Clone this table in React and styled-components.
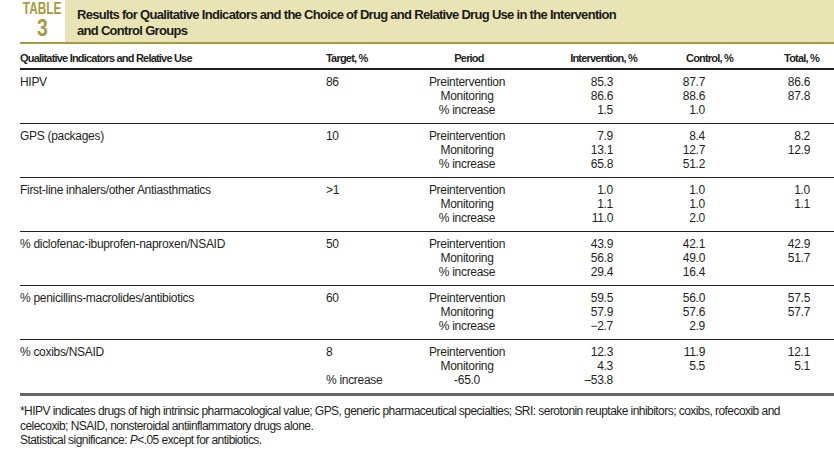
import React from "react";
import styled, { createGlobalStyle } from "styled-components";

const GlobalStyle = createGlobalStyle`
  html, body {
    margin: 0;
    padding: 0;
    background: #fff;
  }
  body {
    font-family: "Liberation Sans Narrow", "Arial Narrow", "Liberation Sans", Arial, sans-serif;
    color: #231f20;
  }
`;

// column layout: width, where headers and values sit
const columns = [
  { width: 306, head: "left", headPad: "0", val: "left", valPad: "0" },
  { width: 100, head: "left", headPad: "0", val: "left", valPad: "0" },
  { width: 82, head: "center", headPad: "0 0 0 4px", val: "center", valPad: "0" },
  { width: 142, head: "right", headPad: "0 13px 0 0", val: "right", valPad: "0 37px 0 0" },
  { width: 110, head: "right", headPad: "0 27px 0 0", val: "right", valPad: "0 55px 0 0" },
  { width: 74, head: "right", headPad: "0 15px 0 0", val: "right", valPad: "0 24px 0 0" },
];

const template = columns.map((c) => c.width + "px").join(" ");

const headers = [
  "Qualitative Indicators and Relative Use",
  "Target, %",
  "Period",
  "Intervention, %",
  "Control, %",
  "Total, %",
];

const groups = [
  {
    lines: [
      ["HIPV", "86", "Preintervention", "85.3", "87.7", "86.6"],
      ["", "", "Monitoring", "86.6", "88.6", "87.8"],
      ["", "", "% increase", "1.5", "1.0", ""],
    ],
  },
  {
    lines: [
      ["GPS (packages)", "10", "Preintervention", "7.9", "8.4", "8.2"],
      ["", "", "Monitoring", "13.1", "12.7", "12.9"],
      ["", "", "% increase", "65.8", "51.2", ""],
    ],
  },
  {
    lines: [
      ["First-line inhalers/other Antiasthmatics", ">1", "Preintervention", "1.0", "1.0", "1.0"],
      ["", "", "Monitoring", "1.1", "1.0", "1.1"],
      ["", "", "% increase", "11.0", "2.0", ""],
    ],
  },
  {
    lines: [
      ["% diclofenac-ibuprofen-naproxen/NSAID", "50", "Preintervention", "43.9", "42.1", "42.9"],
      ["", "", "Monitoring", "56.8", "49.0", "51.7"],
      ["", "", "% increase", "29.4", "16.4", ""],
    ],
  },
  {
    lines: [
      ["% penicillins-macrolides/antibiotics", "60", "Preintervention", "59.5", "56.0", "57.5"],
      ["", "", "Monitoring", "57.9", "57.6", "57.7"],
      ["", "", "% increase", "\u22122.7", "2.9", ""],
    ],
  },
  {
    last: true,
    lines: [
      ["% coxibs/NSAID", "8", "Preintervention", "12.3", "11.9", "12.1"],
      ["", "", "Monitoring", "4.3", "5.5", "5.1"],
      ["", "% increase", "-65.0", "\u201353.8", "", ""],
    ],
  },
];

function App() {
  return (
    <Page>
      <GlobalStyle />
      <TitleBar>
        <Label>
          <LabelWord>TABLE</LabelWord>
          <LabelNum>3</LabelNum>
        </Label>
        <Band>
          Results for Qualitative Indicators and the Choice of Drug and Relative Drug Use in the Intervention
          <br />
          and Control Groups
        </Band>
      </TitleBar>

      <Table>
        <HeadRow>
          {headers.map((h, i) => (
            <HeadCell key={h} $align={columns[i].head} $pad={columns[i].headPad}>
              {h}
            </HeadCell>
          ))}
        </HeadRow>

        {groups.map((g, gi) => (
          <Group key={gi} $last={g.last}>
            {g.lines.map((line, li) =>
              line.map((v, ci) => (
                <Cell
                  key={li + "-" + ci}
                  $align={columns[ci].val}
                  $pad={columns[ci].valPad}
                >
                  {v}
                </Cell>
              ))
            )}
          </Group>
        ))}
      </Table>

      <Notes>
        <p>
          *HIPV indicates drugs of high intrinsic pharmacological value; GPS, generic pharmaceutical specialties; SRI: serotonin reuptake inhibitors; coxibs, rofecoxib and
          <br />
          celecoxib; NSAID, nonsteroidal antiinflammatory drugs alone.
        </p>
        <p>
          Statistical significance: <em>P</em>&lt;.05 except for antibiotics.
        </p>
      </Notes>
    </Page>
  );
}

export default App;

const Page = styled.div`
  width: 834px;
  height: 458px;
  overflow: hidden;
  background: #fff;
`;

const TitleBar = styled.div`
  display: flex;
  height: 42px;
  margin-left: 20px;
  border-bottom: 2px solid #a59d38;
`;

const Label = styled.div`
  width: 45px;
  display: flex;
  flex-direction: column;
  align-items: center;
  color: #a59d38;
`;

const LabelWord = styled.span`
  display: block;
  font-size: 16px;
  line-height: 18px;
  height: 17px;
  font-weight: 700;
  transform: scaleX(0.74);
`;

const LabelNum = styled.span`
  display: block;
  font-size: 23px;
  line-height: 22px;
  font-weight: 700;
  transform: scaleX(0.85);
`;

const Band = styled.div`
  flex: 1;
  background: #e9e4b4;
  padding: 7px 12px 0 12px;
  font-size: 13px;
  line-height: 16px;
  font-weight: 700;
  letter-spacing: -0.7px;
  color: #1a1a1a;
`;

const Table = styled.div`
  margin-left: 20px;
  width: 814px;
`;

const HeadRow = styled.div`
  display: grid;
  grid-template-columns: ${template};
  height: 26px;
  align-items: end;
  border-bottom: 2px solid #231f20;
  padding-bottom: 3px;
  box-sizing: border-box;
`;

const HeadCell = styled.div`
  text-align: ${(p) => p.$align};
  padding: ${(p) => p.$pad};
  font-size: 11px;
  font-weight: 700;
  line-height: 14px;
  letter-spacing: -0.8px;
  white-space: nowrap;
`;

const Group = styled.div`
  display: grid;
  grid-template-columns: ${template};
  grid-auto-rows: 14px;
  padding: 5px 0 6px;
  border-bottom: ${(p) => (p.$last ? "3px solid #666" : "1px solid #231f20")};
`;

const Cell = styled.div`
  text-align: ${(p) => p.$align};
  padding: ${(p) => p.$pad};
  font-size: 12px;
  line-height: 14px;
  letter-spacing: -0.3px;
  white-space: nowrap;
`;

const Notes = styled.div`
  margin: 8px 0 0 20px;
  font-size: 12px;
  line-height: 14.5px;
  letter-spacing: -0.55px;

  p {
    margin: 0;
    white-space: nowrap;
  }
`;
